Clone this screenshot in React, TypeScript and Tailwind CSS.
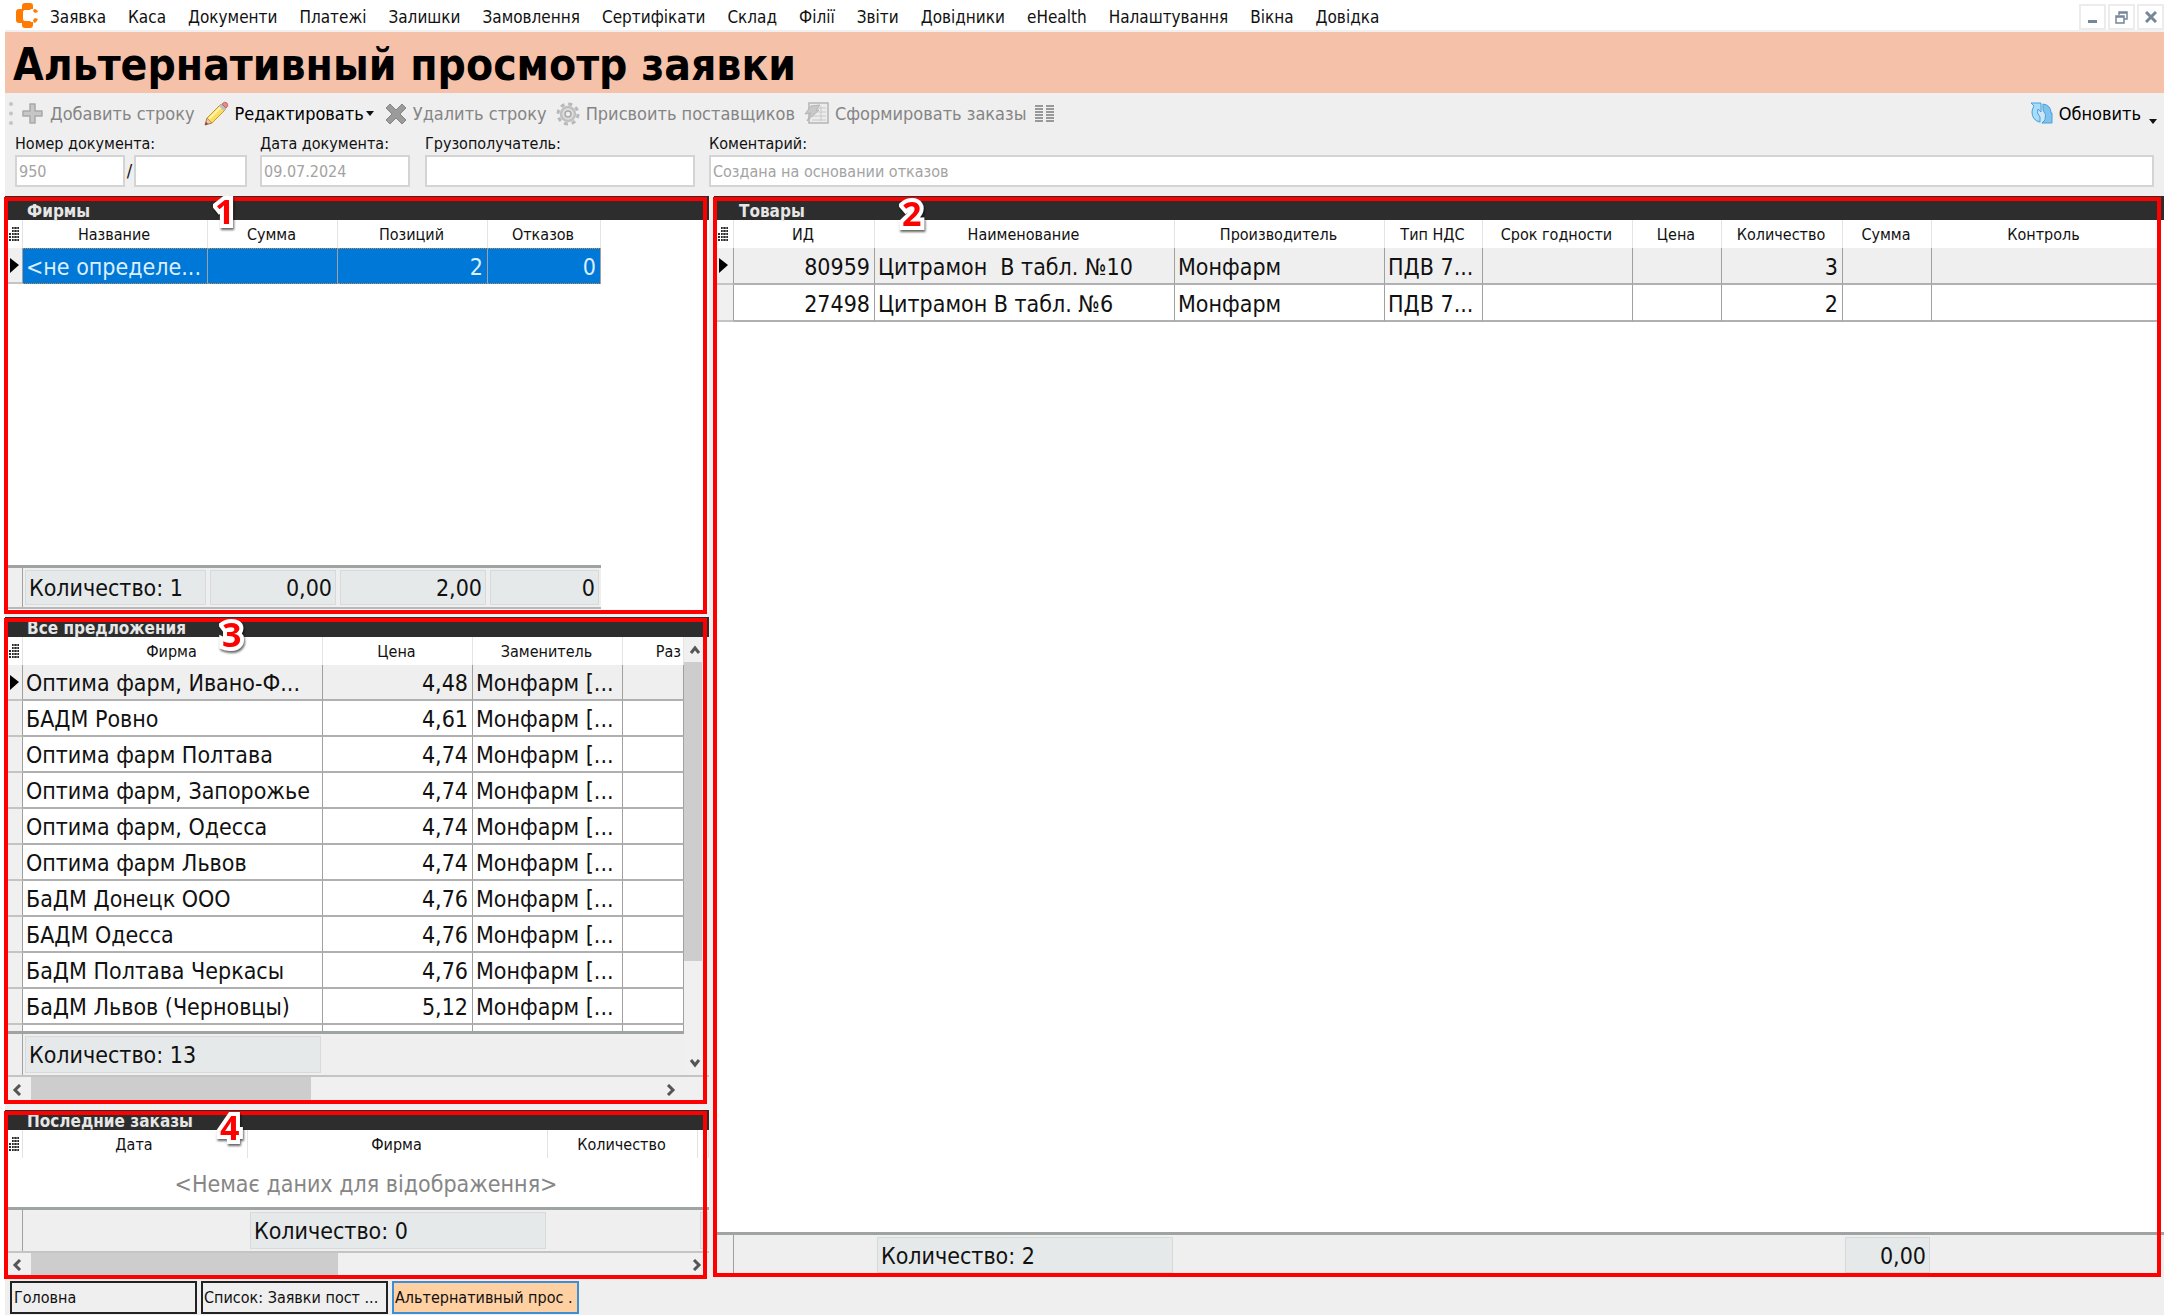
import { type ReactNode } from "react";
import clsx from "clsx";

type Column = {
  title: string;
  width: string;
  align?: "right";
};

type Total = {
  width: string;
  text?: string;
  align?: "right";
};

const menu = [
  "Заявка",
  "Каса",
  "Документи",
  "Платежі",
  "Залишки",
  "Замовлення",
  "Сертифікати",
  "Склад",
  "Філії",
  "Звіти",
  "Довідники",
  "eHealth",
  "Налаштування",
  "Вікна",
  "Довідка",
];

const firmColumns: Column[] = [
  { title: "Название", width: "w-[185px]" },
  { title: "Сумма", width: "w-[130px]", align: "right" },
  { title: "Позиций", width: "w-[150px]", align: "right" },
  { title: "Отказов", width: "w-[113px]", align: "right" },
];

const goodsColumns: Column[] = [
  { title: "ИД", width: "w-[141px]", align: "right" },
  { title: "Наименование", width: "w-[300px]" },
  { title: "Производитель", width: "w-[210px]" },
  { title: "Тип НДС", width: "w-[98px]" },
  { title: "Срок годности", width: "w-[150px]" },
  { title: "Цена", width: "w-[89px]", align: "right" },
  { title: "Количество", width: "w-[121px]", align: "right" },
  { title: "Сумма", width: "w-[89px]", align: "right" },
  { title: "Контроль", width: "w-auto" },
];

const offerColumns: Column[] = [
  { title: "Фирма", width: "w-[300px]" },
  { title: "Цена", width: "w-[150px]", align: "right" },
  { title: "Заменитель", width: "w-[150px]" },
  { title: "Раз", width: "w-auto", align: "right" },
];

const orderColumns: Column[] = [
  { title: "Дата", width: "w-[225px]" },
  { title: "Фирма", width: "w-[300px]" },
  { title: "Количество", width: "w-[150px]" },
  { title: "", width: "w-auto" },
];

const goods = [
  ["80959", "Цитрамон  В табл. №10", "Монфарм", "ПДВ 7...", "", "", "3", "", ""],
  ["27498", "Цитрамон В табл. №6", "Монфарм", "ПДВ 7...", "", "", "2", "", ""],
];

const offers = [
  ["Оптима фарм, Ивано-Ф...", "4,48", "Монфарм [...", ""],
  ["БАДМ Ровно", "4,61", "Монфарм [...", ""],
  ["Оптима фарм Полтава", "4,74", "Монфарм [...", ""],
  ["Оптима фарм, Запорожье", "4,74", "Монфарм [...", ""],
  ["Оптима фарм, Одесса", "4,74", "Монфарм [...", ""],
  ["Оптима фарм Львов", "4,74", "Монфарм [...", ""],
  ["БаДМ Донецк ООО", "4,76", "Монфарм [...", ""],
  ["БАДМ Одесса", "4,76", "Монфарм [...", ""],
  ["БаДМ Полтава Черкасы", "4,76", "Монфарм [...", ""],
  ["БаДМ Львов (Черновцы)", "5,12", "Монфарм [...", ""],
  ["", "", "", ""],
];

const Logo = () => (
  <svg width="22" height="25" viewBox="0 0 22 25" fill="#ff7a00">
    <path d="M6 3 Q6 0 9 0 H14 Q17 0 17 3 V6 H15 L14 7 H9 Q7 7 7 9 V16 Q7 18 9 18 H14 L15 19 H17 V22 Q17 25 14 25 H9 Q6 25 6 22 V20 H3 Q0 20 0 17 V9 Q0 6 3 6 H6 Z" />
    <path d="M18 6 Q21 6 22 9 L19 10 L17 8 Z M22 16 Q21 19 18 20 L17 17 L19 15 Z" />
  </svg>
);

const PlusIcon = () => (
  <svg width="22" height="22" viewBox="0 0 22 22">
    <path d="M8 1 H13 V8 H20 V13 H13 V20 H8 V13 H1 V8 H8 Z" fill="#c6c6c6" stroke="#a9a9a9" strokeWidth="1.5" strokeLinejoin="round" />
  </svg>
);

const PencilIcon = () => (
  <svg width="25" height="25" viewBox="0 0 25 25">
    <path d="M1 24 L3 17 L8 22 Z" fill="#e8c9a0" stroke="#a86f52" />
    <path d="M3 17 L17 3 L22 8 L8 22 Z" fill="#fbdc5e" stroke="#c79a2e" />
    <path d="M5 18 L18 5" stroke="#fff3b0" strokeWidth="2" />
    <path d="M16 4 L21 9" stroke="#b9c3d0" strokeWidth="3" />
    <path d="M18 3 Q20 0 23 2 Q25 5 22 7 Z" fill="#e9898a" stroke="#c46a66" />
    <path d="M1 24 L2 21 L4 23 Z" fill="#8d3b2f" />
  </svg>
);

const CrossIcon = () => (
  <svg width="22" height="22" viewBox="0 0 22 22">
    <path d="M5 1 L11 7 L17 1 L21 5 L15 11 L21 17 L17 21 L11 15 L5 21 L1 17 L7 11 L1 5 Z" fill="#9b9b9b" stroke="#858585" strokeLinejoin="round" />
  </svg>
);

const GearIcon = () => (
  <svg width="24" height="24" viewBox="0 0 24 24" fill="none">
    <circle cx="12" cy="12" r="10" stroke="#b8b8b8" strokeWidth="3" strokeDasharray="4 3.85" />
    <circle cx="12" cy="12" r="7" fill="#dedede" stroke="#c0c0c0" strokeWidth="2.5" />
    <circle cx="12" cy="12" r="3" fill="#efefef" stroke="#a8a8a8" strokeWidth="1.5" />
  </svg>
);

const FormIcon = () => (
  <svg width="25" height="23" viewBox="0 0 25 23" fill="none">
    <rect x="5" y="1" width="19" height="20" fill="#ececec" stroke="#b5b5b5" strokeWidth="1.5" />
    <path d="M8 6 H22 M8 10 H22 M8 14 H22 M8 18 H22 M17 4 V19" stroke="#c8c8c8" />
    <path d="M7 4 L16 3 L12 8 L15 8 L3 19 L7 11 L1 12 Z" fill="#c8c8c8" stroke="#b4b4b4" />
  </svg>
);

const ListIcon = () => (
  <svg width="19" height="18" viewBox="0 0 19 18" stroke="#7d7d7d" strokeWidth="1.5">
    <path d="M0 1 H8 M0 4 H8 M0 7 H8 M0 10 H8 M0 13 H8 M0 16 H8" />
    <path d="M11 1 H19 M11 4 H19 M11 7 H19 M11 10 H19 M11 13 H19 M11 16 H19" />
  </svg>
);

const RefreshIcon = () => (
  <svg width="23" height="23" viewBox="0 0 23 23">
    <circle cx="12" cy="12" r="10" fill="#cfe6f6" />
    <path d="M13 2 Q21 3 21 11 L22 11 V21 H12 L15 18 Q17 12 13 8 Z" fill="#7fc3ee" stroke="#4b9fdc" />
    <path d="M1 1 H11 V10 L8 7 Q6 11 10 15 V20 Q2 18 2 10 Q2 7 4 4 Z" fill="#a9dcf7" stroke="#4b9fdc" />
  </svg>
);

const Caret = () => (
  <svg width="8" height="5" viewBox="0 0 8 5">
    <path d="M0 0 H8 L4 5 Z" fill="#111" />
  </svg>
);

const ColumnsMark = () => (
  <svg className="ml-1" width="10" height="15" viewBox="0 0 10 15" fill="#2b2b2b">
    <path d="M3 0 H10 V2 H3 Z M3 3 H10 V5 H3 Z M3 6 H10 V8 H3 Z M3 9 H10 V11 H3 Z M3 12 H10 V14 H3 Z" />
    <path d="M0 6 H2 V8 H0 Z M0 9 H2 V11 H0 Z M0 12 H2 V14 H0 Z" />
    <path d="M5 0 V15 M8 0 V15" stroke="#ffffff" strokeOpacity="0.6" />
  </svg>
);

const Chevron = ({ d }: { d: string }) => (
  <svg width="12" height="12" viewBox="0 0 12 12" fill="none" stroke="#555" strokeWidth="3">
    <path d={d} />
  </svg>
);

function ToolButton({ icon, children, active }: { icon: ReactNode; children: string; active?: boolean }) {
  return (
    <button
      type="button"
      disabled={!active}
      className={clsx("flex items-center gap-[6px] text-[18px]", active ? "text-black" : "text-[#858585]")}
    >
      {icon}
      {children}
    </button>
  );
}

function WindowButton({ label, children }: { label: string; children: ReactNode }) {
  return (
    <button type="button" aria-label={label} className="flex h-[26px] w-[27px] items-center justify-center border-2 border-[#ececec]">
      {children}
    </button>
  );
}

// Dark caption, then the grid, with the numbered red frame on top of it
function Panel({
  title,
  number,
  className,
  captionClass,
  frameClass,
  numberClass,
  children,
}: {
  title: string;
  number: string;
  className?: string;
  captionClass: string;
  frameClass: string;
  numberClass: string;
  children: ReactNode;
}) {
  return (
    <section className={clsx("relative flex flex-col bg-white", className)}>
      <h2 className={clsx("flex shrink-0 items-center bg-[#2d2d2d] text-[17px] leading-none font-bold text-[#e6e6e6]", captionClass)}>
        {title}
      </h2>
      {children}
      <div className={clsx("pointer-events-none absolute top-px -bottom-[2px] -left-px border-4 border-[#fe0000]", frameClass)} />
      <span
        className={clsx(
          "absolute font-['Open_Sans',sans-serif] text-[34px] leading-none font-bold text-[#fe0000] drop-shadow-[1px_2px_1px_rgba(0,0,0,0.6)] [-webkit-text-stroke:8px_white] [paint-order:stroke_fill]",
          numberClass
        )}
      >
        {number}
      </span>
    </section>
  );
}

function Grid({
  columns,
  rows,
  indicator,
  rowClass,
  selected,
  className,
}: {
  columns: Column[];
  rows: string[][];
  indicator: string;
  rowClass: string;
  selected?: boolean;
  className?: string;
}) {
  return (
    <table className={clsx("table-fixed border-separate border-spacing-0", className)}>
      <colgroup>
        <col className={indicator} />
        {columns.map((c, i) => (
          <col key={i} className={c.width} />
        ))}
      </colgroup>
      <thead>
        <tr className="h-7 text-[16px] leading-none">
          <th className="border-r border-[#e4e4e4] p-0">
            <ColumnsMark />
          </th>
          {columns.map((c, i) => (
            <th
              key={i}
              className={clsx(
                "overflow-hidden border-r border-[#e4e4e4] p-0 pt-[2px] pr-[2px] font-normal whitespace-nowrap",
                c.title === "Раз" ? "text-right" : "text-center"
              )}
            >
              {c.title}
            </th>
          ))}
        </tr>
      </thead>
      <tbody>
        {rows.map((row, r) => (
          <tr key={r} className={clsx("text-[23px] leading-none", rowClass, r === 0 && !selected && "bg-[#efefef]")}>
            <td className="border-r border-b-2 border-r-[#a0a0a0] border-b-[#c4c4c4] bg-[#f0f0f0] p-0">
              {r === 0 && (
                <svg className="ml-[5px]" width="9" height="15" viewBox="0 0 9 15">
                  <path d="M0 0 L9 7 L0 15 Z" fill="#000" />
                </svg>
              )}
            </td>
            {row.map((cell, i) => (
              <td
                key={i}
                className={clsx(
                  "overflow-hidden border-r border-r-[#a0a0a0] p-0 pt-[3px] whitespace-pre",
                  columns[i].align === "right" ? "pr-1 text-right" : "pl-[3px]",
                  selected
                    ? "border-y border-y-[#c98a50] bg-[#0078d7] text-[#dcefff] [border-block-style:dotted]"
                    : "border-b-2 border-b-[#b0b0b0]"
                )}
              >
                {cell}
              </td>
            ))}
          </tr>
        ))}
      </tbody>
    </table>
  );
}

function Totals({ items, indicator, className }: { items: Total[]; indicator: string; className?: string }) {
  return (
    <div className={clsx("flex shrink-0 border-t-3 border-[#9fa3a2] bg-[#efefef] text-[23px] leading-none", className)}>
      <div className={clsx("shrink-0 border-r border-[#a0a0a0]", indicator)} />
      {items.map((t, i) => (
        <div key={i} className={clsx("flex py-[2px] pr-[2px] pl-[2px]", t.width === "w-auto" ? "flex-1" : "shrink-0", t.width)}>
          {t.text !== undefined && (
            <output
              className={clsx(
                "flex flex-1 items-center border border-[#d6dadb] bg-[#e5e9ea] px-[3px] pt-[2px]",
                t.align === "right" && "justify-end"
              )}
            >
              {t.text}
            </output>
          )}
        </div>
      ))}
    </div>
  );
}

function HorizontalScroll({ thumb, className }: { thumb: string; className: string }) {
  return (
    <div className={clsx("flex shrink-0 items-stretch border-t-2 border-[#c4c4c4] bg-[#f0f0f0]", className)}>
      <button type="button" aria-label="Влево" className="flex w-[26px] shrink-0 items-center justify-center">
        <Chevron d="M8 1 L3 6 L8 11" />
      </button>
      <div className="flex-1">
        <div className={clsx("h-full bg-[#cdcdcd]", thumb)} />
      </div>
      <button type="button" aria-label="Вправо" className="flex w-[26px] shrink-0 items-center justify-center">
        <Chevron d="M4 1 L9 6 L4 11" />
      </button>
    </div>
  );
}

function Field({ id, label, value, className }: { id: string; label: string; value: string; className: string }) {
  return (
    <div className={clsx("flex flex-col gap-px", className)}>
      <label htmlFor={id} className="text-[16px] leading-5 whitespace-nowrap">
        {label}
      </label>
      <input
        id={id}
        readOnly
        defaultValue={value}
        className="h-8 w-full border-2 border-[#d4d4d4] bg-white px-[2px] text-[16px] text-[#a3a3a3]"
      />
    </div>
  );
}

export default function App() {
  return (
    <div className="flex min-h-screen flex-col border-r-2 border-l-[5px] border-white bg-[#efefef] font-['DejaVu_Sans_Condensed','DejaVu_Sans',sans-serif] text-[#111]">
      <nav className="flex h-8 shrink-0 items-center border-b-2 border-[#f0f0f0] bg-white pl-[11px]">
        <Logo />
        <ul className="flex flex-1 gap-[22px] pt-[5px] pl-3 text-[17px]">
          {menu.map((item) => (
            <li key={item}>
              <a href="#">{item}</a>
            </li>
          ))}
        </ul>
        <div className="flex gap-[2px] pt-1">
          <WindowButton label="Згорнути">
            <svg width="12" height="14" viewBox="0 0 12 14">
              <path d="M1 10 H10 V13 H1 Z" fill="#76879a" />
            </svg>
          </WindowButton>
          <WindowButton label="Відновити">
            <svg width="13" height="13" viewBox="0 0 13 13" fill="none" stroke="#76879a" strokeWidth="1.5">
              <path d="M4 4 V1 H12 V8 H9 M4 2 H12 M1 5 H9 V12 H1 Z M1 6 H9" />
            </svg>
          </WindowButton>
          <WindowButton label="Закрити">
            <svg width="12" height="12" viewBox="0 0 12 12" stroke="#76879a" strokeWidth="3">
              <path d="M1 1 L11 11 M11 1 L1 11" />
            </svg>
          </WindowButton>
        </div>
      </nav>

      <header className="flex h-[61px] shrink-0 items-center bg-[#f6c1a9] pl-2">
        <h1 className="pt-1 text-[44px] leading-none font-bold text-black">Альтернативный просмотр заявки</h1>
      </header>

      <div className="flex h-[41px] shrink-0 items-center gap-[9px] pr-[7px] pl-1">
        <div className="h-[23px] border-l-4 border-dotted border-[#c4c4c4]" />
        <ToolButton icon={<PlusIcon />}>Добавить строку</ToolButton>
        <div className="flex items-center gap-[2px] pr-[2px]">
          <ToolButton active icon={<PencilIcon />}>
            Редактировать
          </ToolButton>
          <Caret />
        </div>
        <ToolButton icon={<CrossIcon />}>Удалить строку</ToolButton>
        <ToolButton icon={<GearIcon />}>Присвоить поставщиков</ToolButton>
        <ToolButton icon={<FormIcon />}>Сформировать заказы</ToolButton>
        <button type="button" aria-label="Колонки">
          <ListIcon />
        </button>
        <div className="ml-auto flex items-center gap-2">
          <ToolButton active icon={<RefreshIcon />}>
            Обновить
          </ToolButton>
          <button type="button" aria-label="Параметры обновления" className="pt-4">
            <Caret />
          </button>
        </div>
      </div>

      <form className="flex h-[62px] shrink-0 items-start pr-[10px] pl-[10px]">
        <Field id="number" label="Номер документа:" value="950" className="w-[110px]" />
        <span className="w-[9px] pt-[25px] text-center text-[18px] leading-6">/</span>
        <input aria-label="Номер документа, продолжение" readOnly className="mt-[21px] h-8 w-[113px] border-2 border-[#d4d4d4] bg-white" />
        <Field id="date" label="Дата документа:" value="09.07.2024" className="ml-[13px] w-[150px]" />
        <Field id="receiver" label="Грузополучатель:" value="" className="ml-[15px] w-[270px]" />
        <Field id="comment" label="Коментарий:" value="Создана на основании отказов" className="ml-[14px] flex-1" />
      </form>

      <main className="flex flex-1 gap-[5px]">
        <div className="flex w-[704px] shrink-0 flex-col">
          <Panel
            title="Фирмы"
            number="1"
            className="mb-[5px] flex-1"
            captionClass="h-6 pt-[7px] pl-[22px]"
            frameClass="right-[2px]"
            numberClass="-top-[2px] left-[210px]"
          >
            <div className="flex-1">
              <Grid
                columns={firmColumns}
                rows={[["<не определе...", "", "2", "0"]]}
                indicator="w-[18px]"
                rowClass="h-[36px]"
                selected
                className="w-[596px]"
              />
            </div>
            <Totals
              indicator="w-[18px]"
              className="mb-[3px] h-[44px] w-[596px] border-b-2 border-b-[#b8b8b8]"
              items={[
                { width: "w-[185px]", text: "Количество: 1" },
                { width: "w-[130px]", text: "0,00", align: "right" },
                { width: "w-[150px]", text: "2,00", align: "right" },
                { width: "w-[113px]", text: "0", align: "right" },
              ]}
            />
          </Panel>

          <Panel
            title="Все предложения"
            number="3"
            className="mb-2"
            captionClass="h-5 pt-[3px] pl-[22px]"
            frameClass="right-[2px]"
            numberClass="top-0 left-[217px]"
          >
            <div className="flex">
              <div className="flex min-w-0 flex-1 flex-col">
                <div className="h-[394px] overflow-hidden">
                  <Grid columns={offerColumns} rows={offers} indicator="w-[18px]" rowClass="h-9" className="w-full" />
                </div>
                <Totals
                  indicator="w-[18px]"
                  className="h-[44px]"
                  items={[{ width: "w-[300px]", text: "Количество: 13" }, { width: "w-auto" }]}
                />
              </div>
              <div className="flex w-[25px] shrink-0 flex-col bg-[#f0f0f0] pr-[7px]">
                <button type="button" aria-label="Вверх" className="flex h-[25px] items-center justify-center pl-1">
                  <Chevron d="M2 9 L6 4 L10 9" />
                </button>
                <div className="flex-1">
                  <div className="h-[77%] bg-[#cdcdcd]" />
                </div>
                <button type="button" aria-label="Вниз" className="flex h-[25px] items-center justify-center pl-1">
                  <Chevron d="M2 3 L6 8 L10 3" />
                </button>
              </div>
            </div>
            <HorizontalScroll thumb="w-[280px]" className="h-[27px] pr-[26px]" />
          </Panel>

          <Panel
            title="Последние заказы"
            number="4"
            captionClass="h-5 pt-[2px] pl-[22px]"
            frameClass="right-[2px]"
            numberClass="top-0 left-[215px]"
          >
            <Grid columns={orderColumns} rows={[]} indicator="w-[18px]" rowClass="h-9" className="w-full" />
            <p className="h-[49px] pt-[15px] pl-[18px] text-center text-[23px] leading-none text-[#868686]">
              &lt;Немає даних для відображення&gt;
            </p>
            <Totals
              indicator="w-[18px]"
              className="h-[44px]"
              items={[
                { width: "w-[225px]" },
                { width: "w-[300px]", text: "Количество: 0" },
                { width: "w-[150px]" },
                { width: "w-auto", text: "" },
              ]}
            />
            <HorizontalScroll thumb="w-[307px]" className="h-[26px]" />
          </Panel>
        </div>

        <Panel
          title="Товары"
          number="2"
          className="mb-[2px] min-w-0 flex-1"
          captionClass="h-6 pt-[7px] pl-[25px]"
          frameClass="right-[3px]"
          numberClass="top-0 left-[188px]"
        >
          <div className="flex-1 pr-[6px]">
            <Grid columns={goodsColumns} rows={goods} indicator="w-[20px]" rowClass="h-[37px]" className="w-full" />
          </div>
          <Totals
            indicator="w-[20px]"
            className="h-[43px]"
            items={[
              { width: "w-[141px]" },
              { width: "w-[300px]", text: "Количество: 2" },
              { width: "w-auto" },
              { width: "w-[89px]", text: "0,00", align: "right" },
              { width: "w-[232px]" },
            ]}
          />
        </Panel>
      </main>

      <footer className="flex h-[38px] shrink-0 gap-1 pt-1 pb-px pl-[5px] text-[16px]">
        <button type="button" className="w-[187px] overflow-hidden border-2 border-[#222] px-[2px] text-left whitespace-nowrap">
          Головна
        </button>
        <button type="button" className="w-[187px] overflow-hidden border-2 border-[#222] px-px text-left whitespace-nowrap">
          Список: Заявки пост ...
        </button>
        <button type="button" className="w-[187px] overflow-hidden border-2 border-[#3c8fd6] bg-[#ffd0a2] px-px text-left whitespace-nowrap">
          Альтернативный прос .
        </button>
      </footer>
    </div>
  );
}
